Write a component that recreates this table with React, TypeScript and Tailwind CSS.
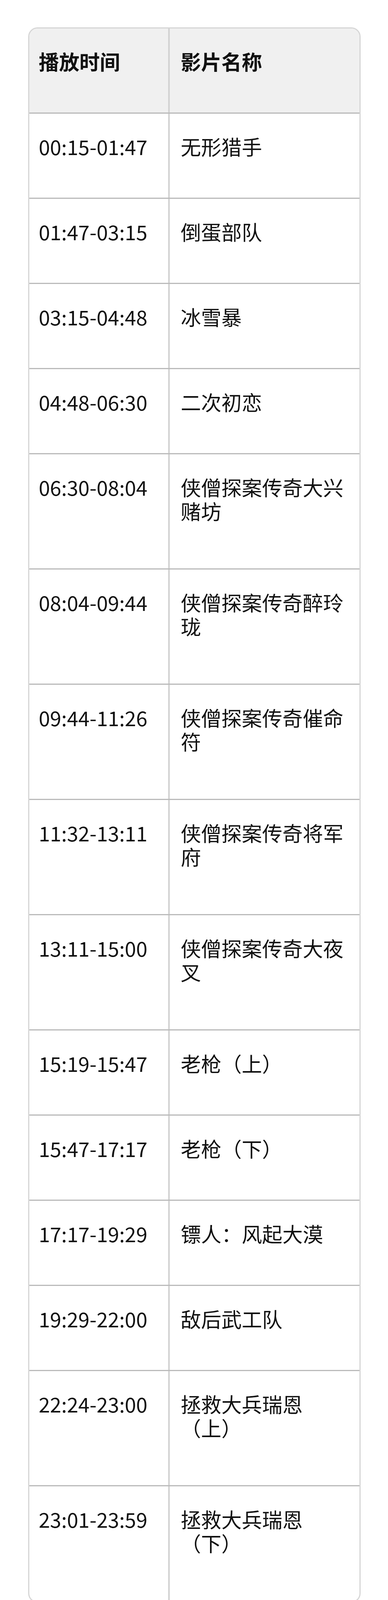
import React from 'react'

const ROWS: [string, string][] = [
  ['00:15-01:47', '无形猎手'],
  ['01:47-03:15', '倒蛋部队'],
  ['03:15-04:48', '冰雪暴'],
  ['04:48-06:30', '二次初恋'],
  ['06:30-08:04', '侠僧探案传奇大兴赌坊'],
  ['08:04-09:44', '侠僧探案传奇醉玲珑'],
  ['09:44-11:26', '侠僧探案传奇催命符'],
  ['11:32-13:11', '侠僧探案传奇将军府'],
  ['13:11-15:00', '侠僧探案传奇大夜叉'],
  ['15:19-15:47', '老枪（上）'],
  ['15:47-17:17', '老枪（下）'],
  ['17:17-19:29', '镖人：风起大漠'],
  ['19:29-22:00', '敌后武工队'],
  ['22:24-23:00', '拯救大兵瑞恩（上）'],
  ['23:01-23:59', '拯救大兵瑞恩（下）'],
]

export default function App() {
  return (
    <div
      className="w-[992px] min-h-[4248px] bg-white text-[#111] pt-[70px]"
      style={{ fontFamily: '"Noto Sans CJK SC", "Noto Sans", sans-serif' }}
    >
      <div className="ml-[72px] w-[850px] border-[3px] border-[#d6d6d6] rounded-[24px] overflow-hidden text-[52px] leading-[61px] [text-spacing-trim:space-all]">
        {/* header */}
        <div className="grid grid-cols-[359px_1fr] h-[218px] bg-[#f0f0f0] border-b-[3px] border-[#bababa] font-bold">
          <div className="pl-[24px] pt-[53px] border-r-[4px] border-[#d2d2d2]">播放时间</div>
          <div className="pl-[28px] pt-[53px]">影片名称</div>
        </div>

        {ROWS.map(([time, name], i) => {
          const long = name.length > 8
          const last = i === ROWS.length - 1
          return (
            <div
              key={time}
              className={`grid grid-cols-[359px_1fr] ${long ? 'h-[295px]' : 'h-[218px]'} ${last ? '' : 'border-b-[3px] border-[#bababa]'}`}
            >
              <div className="pl-[24px] pt-[53px] border-r-[4px] border-[#d2d2d2]">{time}</div>
              <div className="pl-[28px] pr-[20px] pt-[53px]">{name}</div>
            </div>
          )
        })}
      </div>

      {/* bottom bar artifact */}
      <div className="flex justify-end items-center pr-[25px] mt-[96px] h-[32px]">
        <div className="w-[60px] h-[24px] bg-gradient-to-r from-[#ffffff] to-[#f4f4f4] mr-[5px]" />
        <div className="w-[15px] h-[30px] bg-gradient-to-b from-[#9a9a9a] to-[#111]" />
        <div className="w-[227px] h-[20px] bg-gradient-to-r from-[#f6f6f6] via-[#ececec] via-80% to-[#2a2a2a]" />
      </div>
    </div>
  )
}
